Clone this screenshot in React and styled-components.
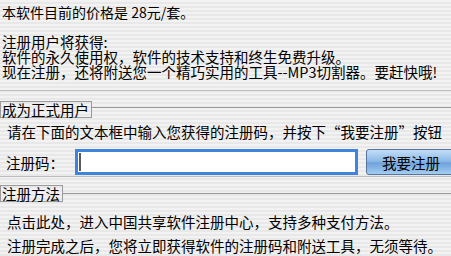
import React from "react";
import styled, { createGlobalStyle } from "styled-components";

const GlobalStyle = createGlobalStyle`
  html, body {
    margin: 0;
    padding: 0;
    width: 451px;
    height: 256px;
    overflow: hidden;
  }
  body {
    font-family: "Noto Sans CJK SC", "Noto Sans", sans-serif;
    color: #000;
    background: repeating-linear-gradient(
      to bottom,
      #f2f2f2 0px,
      #f2f2f2 2px,
      #e8e8e8 2px,
      #e8e8e8 4px
    );
  }
`;

const Page = styled.div`
  width: 451px;
  height: 256px;
  overflow: hidden;
`;

const Intro = styled.div`
  padding: 4px 0 11px 2px;
`;

const PriceLine = styled.div`
  font-size: 14px;
  line-height: 17px;
  white-space: nowrap;
`;

const Benefits = styled.div`
  margin-top: 13px;
  font-size: 14.5px;
  line-height: 15px;
  white-space: nowrap;
`;

const Section = styled.div`
  border-top: 1px solid #bdbdbd;
  padding-top: ${({ $top }) => $top}px;
`;

const LegendRow = styled.div`
  display: flex;
  align-items: flex-start;
`;

const Legend = styled.div`
  border: 1px solid #9a9a9a;
  padding: 0 2px 0 1px;
  font-size: 14.5px;
  line-height: 15px;
  white-space: nowrap;
`;

const LegendLine = styled.div`
  flex: 1;
  margin-top: ${({ $offset }) => $offset}px;
  border-top: 1px solid #9a9a9a;
`;

const Body = styled.div`
  padding-left: 7px;
  font-size: 14.5px;
  white-space: nowrap;
`;

const Instruction = styled.div`
  margin-top: 5px;
  line-height: 18px;
`;

const FormRow = styled.div`
  display: flex;
  align-items: center;
  margin-top: 8px;
  height: 26px;
  padding-bottom: 1px;
`;

const Label = styled.span`
  flex: none;
  width: 61px;
  margin-left: -1px;
  margin-right: 8px;
`;

const CodeField = styled.div`
  flex: none;
  box-sizing: border-box;
  width: 283px;
  height: 26px;
  border: 3px solid #3f84dc;
  background: #fff;
  display: flex;
  align-items: center;
  padding-left: 1px;
`;

const Caret = styled.span`
  width: 2px;
  height: 18px;
  background: #5a5a5a;
`;

const RegisterButton = styled.button`
  box-sizing: border-box;
  margin-left: 8px;
  flex: none;
  width: 92px;
  height: 26px;
  border: 1px solid #55759f;
  border-radius: 3px;
  background: linear-gradient(
    to bottom,
    #c3ddf6 0%,
    #8ebbe8 45%,
    #6fa3dc 55%,
    #a3cdf2 100%
  );
  font-family: "Noto Sans CJK SC", "Noto Sans", sans-serif;
  font-size: 14.5px;
  color: #000;
  padding: 0 0 0 15px;
  text-align: left;
  cursor: pointer;
`;

const Paragraphs = styled.div`
  margin-top: 11px;
  display: flex;
  flex-direction: column;
  gap: 7px;
  line-height: 17px;
`;

export default function App() {
  return (
    <Page>
      <GlobalStyle />
      <Intro>
        <PriceLine>本软件目前的价格是 28元/套。</PriceLine>
        <Benefits>
          <div>注册用户将获得:</div>
          <div>软件的永久使用权，软件的技术支持和终生免费升级。</div>
          <div>现在注册，还将附送您一个精巧实用的工具--MP3切割器。要赶快哦!</div>
        </Benefits>
      </Intro>

      <Section $top={10}>
        <LegendRow>
          <Legend>成为正式用户</Legend>
          <LegendLine $offset={6} />
        </LegendRow>
        <Body>
          <Instruction>
            请在下面的文本框中输入您获得的注册码，并按下“我要注册”按钮
          </Instruction>
          <FormRow>
            <Label>注册码：</Label>
            <CodeField>
              <Caret />
            </CodeField>
            <RegisterButton>我要注册</RegisterButton>
          </FormRow>
        </Body>
      </Section>

      <Section $top={8}>
        <LegendRow>
          <Legend>注册方法</Legend>
          <LegendLine $offset={8} />
        </LegendRow>
        <Body>
          <Paragraphs>
            <div>点击此处，进入中国共享软件注册中心，支持多种支付方法。</div>
            <div>注册完成之后，您将立即获得软件的注册码和附送工具，无须等待。</div>
          </Paragraphs>
        </Body>
      </Section>
    </Page>
  );
}
